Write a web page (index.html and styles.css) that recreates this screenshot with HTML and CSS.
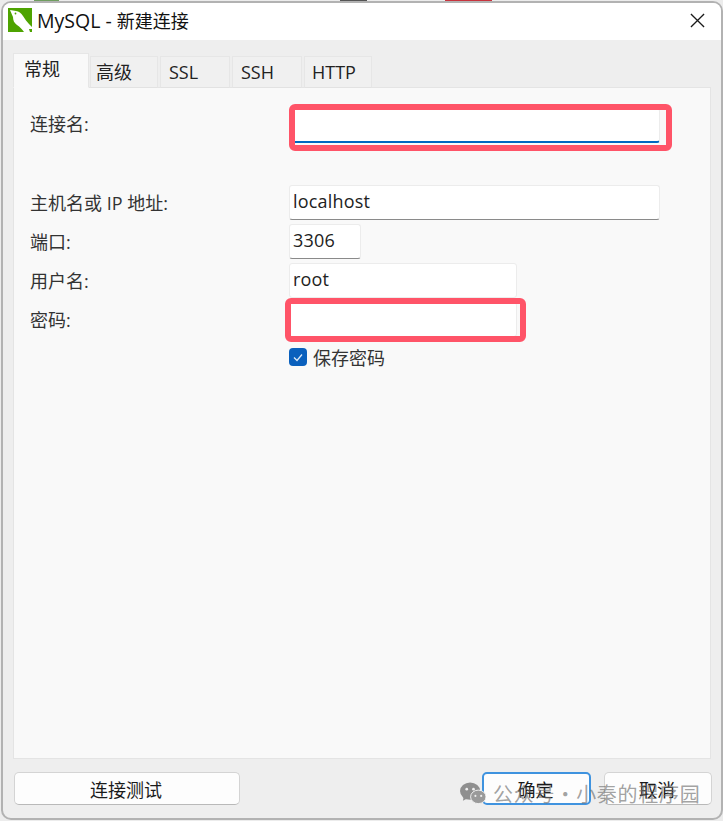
FILE: index.html
```html
<!DOCTYPE html>
<html lang="zh-CN">
<head>
    <meta charset="UTF-8">
    <title>MySQL - 新建连接</title>
    <link rel="stylesheet" href="styles.css">
</head>
<body>
    <!-- bits of whatever is behind the dialog -->
    <div class="behind behind-green"></div>
    <div class="behind behind-red"></div>
    <div class="behind behind-dark"></div>

    <div class="window">
        <div class="titlebar">
            <svg class="app-icon" viewBox="0 0 24 24">
                <rect width="24" height="24" fill="#4ea301"/>
                <path d="M2 2 L8 3 C11 3.5 13 5 15 8 C17 11 19 14 21 16 L24 19 L24 21 L21 21 L22 24 L16 24 C14 21 12 19 9 17 C6 15 5 12 5 9 C4 7 3 4 2 2 Z" fill="#fff"/>
                <circle cx="7.5" cy="5.5" r="0.9" fill="#4ea301"/>
            </svg>
            <span class="title"><span class="title-en">MySQL - </span>新建连接</span>
            <svg class="close" viewBox="0 0 16 16">
                <path d="M1 1 L15 15 M15 1 L1 15" stroke="#1a1a1a" stroke-width="1.4" fill="none"/>
            </svg>
        </div>

        <div class="content">
            <div class="tabs">
                <div class="tab active">常规</div>
                <div class="tab tab-1">高级</div>
                <div class="tab tab-2">SSL</div>
                <div class="tab tab-3">SSH</div>
                <div class="tab tab-4">HTTP</div>
            </div>

            <div class="panel">
                <div class="row row-name">
                    <label>连接名:</label>
                    <div class="field field-wide focused"></div>
                </div>
                <div class="row">
                    <label>主机名或 IP 地址:</label>
                    <div class="field field-wide">localhost</div>
                </div>
                <div class="row">
                    <label>端口:</label>
                    <div class="field field-port">3306</div>
                </div>
                <div class="row">
                    <label>用户名:</label>
                    <div class="field field-user">root</div>
                </div>
                <div class="row">
                    <label>密码:</label>
                    <div class="field field-user"></div>
                </div>
                <div class="row row-check">
                    <label></label>
                    <div class="check-wrap">
                        <svg class="check" viewBox="0 0 18 18">
                            <rect width="18" height="18" rx="4" fill="#0a60bd"/>
                            <path d="M5 9.5 L8 12.5 L13 6.5" stroke="#dbe9f7" stroke-width="1.3" fill="none"/>
                        </svg>
                        <span>保存密码</span>
                    </div>
                </div>
            </div>

            <div class="footer">
                <button class="btn btn-test">连接测试</button>
                <div class="footer-right">
                    <button class="btn btn-ok">确定</button>
                    <button class="btn btn-cancel">取消</button>
                </div>
            </div>
        </div>
    </div>

    <!-- red marks drawn on top of the screenshot -->
    <div class="mark mark-name"></div>
    <div class="mark mark-pass"></div>

    <div class="watermark">
        <svg class="wechat" viewBox="0 0 27 23">
            <ellipse cx="10.5" cy="9" rx="10.5" ry="9" fill="#8f8f8f"/>
            <path d="M4 14 L3 19 L9 16 Z" fill="#8f8f8f"/>
            <ellipse cx="19" cy="15" rx="8" ry="7" fill="#9a9a9a" stroke="#f0f0f0"/>
            <circle cx="7" cy="7" r="1.4" fill="#eee"/>
            <circle cx="14" cy="7" r="1.4" fill="#eee"/>
            <circle cx="16" cy="14" r="1.1" fill="#eee"/>
            <circle cx="22" cy="14" r="1.1" fill="#eee"/>
        </svg>
        <span>公众号 · 小秦的程序园</span>
    </div>
</body>
</html>
```

FILE: styles.css
```css
html, body {
    margin: 0;
    height: 821px;
    overflow: hidden;
}

body {
    position: relative;
    background: #ececec;
    font-family: "Open Sans", "Noto Sans CJK SC", sans-serif;
    font-size: 18px;
    color: #1c1c1c;
    padding: 1px 0 1px 1px;
    box-sizing: border-box;
}

.behind {
    position: absolute;
    top: 0;
    height: 2px;
}

.behind-green { left: 34px; width: 25px; background: #6f9e5f; }
.behind-red { left: 445px; width: 47px; background: #c8333d; }
.behind-dark { left: 340px; width: 27px; background: #555; }

.window {
    position: relative;
    height: 819px;
    box-sizing: border-box;
    background: #eeeeee;
    border: 2px solid #b2b2b2;
    border-radius: 10px;
    overflow: hidden;
    display: flex;
    flex-direction: column;
}

.titlebar {
    height: 37px;
    box-sizing: border-box;
    background: #fff;
    display: flex;
    align-items: center;
    padding: 0 16px 3px 5px;
    flex: none;
}

.app-icon {
    width: 24px;
    height: 24px;
    margin-right: 5px;
}

.title {
    flex: 1;
    font-size: 18px;
    color: #111;
    margin-top: 1px;
}

.title-en {
    font-size: 19.5px;
}

.close {
    width: 15px;
    height: 15px;
}

.content {
    flex: 1;
    display: flex;
    flex-direction: column;
    padding: 13px 10px 0 10px;
}

.tabs {
    display: flex;
    align-items: flex-end;
    height: 35px;
    margin-bottom: -1px;
    position: relative;
    z-index: 1;
}

.tab {
    height: 32px;
    box-sizing: border-box;
    border: 1px solid #e6e6e6;
    border-bottom: 1px solid #e2e2e2;
    background: #f0f0f0;
    font-size: 18px;
    line-height: 31px;
    padding-left: 5px;
    margin-right: 2px;
    color: #222;
}

.tab.active {
    width: 76px;
    height: 35px;
    margin-right: 1px;
    padding-left: 10px;
    background: #f9f9f9;
    border-bottom-color: #f9f9f9;
    line-height: 30px;
}

.tab-1 { width: 68px; }
.tab-2 { width: 70px; padding-left: 8px; }
.tab-3 { width: 70px; padding-left: 8px; }
.tab-4 { width: 68px; padding-left: 7px; }

.panel {
    height: 672px;
    box-sizing: border-box;
    background: #f9f9f9;
    border: 1px solid #e4e4e4;
    padding-top: 20px;
}

.row {
    display: grid;
    grid-template-columns: 275px 1fr;
    align-items: center;
    height: 35px;
    margin-bottom: 4px;
}

.row label {
    padding: 0 0 2px 16px;
    font-size: 18px;
    color: #333;
}

.row-name {
    margin-bottom: 42px;
}

.row-name label {
    padding-bottom: 6px;
}

.row-check {
    margin-top: 7px;
    height: 24px;
}

.field {
    height: 35px;
    box-sizing: border-box;
    background: #fff;
    border: 1px solid #ececec;
    border-bottom: 1px solid #8a8a8a;
    border-radius: 3px;
    padding-left: 3px;
    font-size: 18px;
    letter-spacing: 0.2px;
    line-height: 31px;
    color: #222;
}

.field-wide { width: 371px; }
.field-port { width: 72px; }
.field-user { width: 228px; border-bottom-color: #ececec; }

.field.focused {
    border-bottom: 2px solid #0067c0;
}

.check-wrap {
    display: flex;
    align-items: center;
    gap: 6px;
    font-size: 18px;
    color: #333;
}

.check {
    width: 18px;
    height: 18px;
}

.footer {
    display: flex;
    justify-content: space-between;
    padding: 13px 0 0 1px;
    margin-right: -1px;
}

.footer-right {
    display: flex;
    gap: 13px;
}

.btn {
    height: 33px;
    background: #fdfdfd;
    border: 1px solid #d4d4d4;
    border-bottom-color: #b9b9b9;
    border-radius: 5px;
    font-family: inherit;
    font-size: 18px;
    color: #1a1a1a;
    padding: 0 2px 0 0;
}

.btn-test { width: 226px; }
.btn-ok { width: 109px; border: 2px solid #3f93df; }
.btn-cancel { width: 108px; }

.mark {
    position: absolute;
    box-sizing: border-box;
    border: 6px solid #ff5468;
    border-radius: 6px;
}

.mark-name {
    left: 289px;
    top: 104px;
    width: 383px;
    height: 47px;
}

.mark-pass {
    left: 285px;
    top: 298px;
    width: 241px;
    height: 44px;
}

.watermark {
    position: absolute;
    left: 460px;
    top: 779px;
    display: flex;
    align-items: center;
    gap: 7px;
    font-family: "Noto Sans CJK SC", sans-serif;
    font-size: 20px;
    letter-spacing: 0.7px;
    word-spacing: -5px;
    color: rgba(110, 110, 110, 0.65);
    white-space: nowrap;
}

.wechat {
    width: 26px;
    height: 23px;
}
```
